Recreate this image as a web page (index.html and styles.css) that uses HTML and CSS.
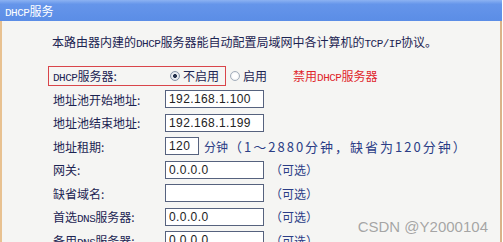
FILE: index.html
```html
<!DOCTYPE html>
<html lang="zh-CN">
<head>
    <meta charset="UTF-8">
    <meta name="viewport" content="width=device-width, initial-scale=1.0">
    <title>DHCP服务</title>
    <link rel="stylesheet" href="styles.css">
</head>
<body>
    <div class="panel">
        <div class="titleBar"><span class="en">DHCP</span>服务</div>
        <div class="panelBody">
            <div class="intro">本路由器内建的<span class="en">DHCP</span>服务器能自动配置局域网中各计算机的<span class="en">TCP/IP</span>协议。</div>
            <div class="form">
                <div class="row dhcpRow">
                    <span class="mark"></span>
                    <span class="label"><span class="en">DHCP</span>服务器:</span>
                    <span class="radio checked"></span>
                    <span class="radioText">不启用</span>
                    <span class="radio second"></span>
                    <span class="radioText">启用</span>
                    <span class="note">禁用<span class="en">DHCP</span>服务器</span>
                </div>
                <div class="row">
                    <span class="label">地址池开始地址:</span>
                    <span class="field">192.168.1.100</span>
                </div>
                <div class="row">
                    <span class="label">地址池结束地址:</span>
                    <span class="field">192.168.1.199</span>
                </div>
                <div class="row">
                    <span class="label">地址租期:</span>
                    <span class="field small">120</span>
                    <span class="unit">分钟</span>
                    <span class="hint wide">（1～2880分钟，缺省为120分钟）</span>
                </div>
                <div class="row">
                    <span class="label">网关:</span>
                    <span class="field">0.0.0.0</span>
                    <span class="hint">（可选）</span>
                </div>
                <div class="row">
                    <span class="label">缺省域名:</span>
                    <span class="field"></span>
                    <span class="hint">（可选）</span>
                </div>
                <div class="row">
                    <span class="label">首选<span class="en">DNS</span>服务器:</span>
                    <span class="field">0.0.0.0</span>
                    <span class="hint">（可选）</span>
                </div>
                <div class="row">
                    <span class="label">备用<span class="en">DNS</span>服务器:</span>
                    <span class="field">0.0.0.0</span>
                    <span class="hint">（可选）</span>
                </div>
            </div>
            <div class="watermark">CSDN @Y2000104</div>
        </div>
    </div>
</body>
</html>
```

FILE: styles.css
```css
* {
    box-sizing: border-box;
}

body {
    margin: 0;
    background-color: #ffffff;
    font-family: "Noto Sans CJK SC", "Liberation Sans", sans-serif;
    font-size: 12px;
    overflow: hidden;
}

/* half-width latin, like the old bitmap font */
.en {
    font-family: "Liberation Mono", monospace;
    font-size: 11px;
    letter-spacing: -0.5px;
}

.panel {
    width: 502px;
    height: 242px;
    display: flex;
    flex-direction: column;
}

.titleBar {
    height: 21px;
    line-height: 21px;
    padding-left: 5px;
    color: #ffffff;
    background: linear-gradient(#8cb2f2, #6595ea 20%, #5b8de6);
}

.panelBody {
    position: relative;
    flex: 1;
    background-color: #f5f5f3;
    border-left: 2px solid #e8c190;
    border-right: 2px solid #d9b389;
}

.intro {
    padding: 15px 0 0 50px;
    line-height: 12px;
    color: #1c2452;
}

.form {
    margin-top: 14px;
    padding-left: 51px;
}

.row {
    position: relative;
    display: flex;
    align-items: center;
    height: 23.5px;
    color: #1c2452;
}

.label {
    width: 112px;
    flex-shrink: 0;
}

.mark {
    position: absolute;
    left: -5px;
    top: 2px;
    width: 178px;
    height: 20px;
    border: 1px solid #d9454a;
}

.radio {
    width: 10px;
    height: 10px;
    margin-left: 5px;
    border-radius: 50%;
    border: 1px solid #a3adbb;
    background: radial-gradient(circle, #ffffff 40%, #dde1e6 100%);
}

.radio.checked {
    background: radial-gradient(circle, #27334d 0, #27334d 30%, #eef1f5 40%, #d0d6de 100%);
    border-color: #8592a6;
}

.radio.second {
    margin-left: 11px;
}

.radioText {
    margin-left: 3px;
}

.note {
    margin-left: 26px;
    color: #e0262b;
}

.field {
    width: 99px;
    height: 18px;
    line-height: 16px;
    padding-left: 3px;
    background-color: #ffffff;
    border: 1px solid #56627e;
    color: #222222;
    font-family: "Liberation Sans", sans-serif;
    font-size: 12px;
    letter-spacing: 0.4px;
}

.field.small {
    width: 34px;
}

.unit {
    margin-left: 5px;
    color: #2b3d86;
}

.hint {
    margin-left: 6px;
    color: #2b3d86;
}

.hint.wide {
    margin-left: 1px;
    font-size: 13px;
    letter-spacing: 2px;
}

.watermark {
    position: absolute;
    right: 12px;
    top: 197px;
    white-space: nowrap;
    color: rgba(130, 130, 130, 0.7);
    font-family: "Liberation Sans", sans-serif;
    font-size: 15px;
}
```
